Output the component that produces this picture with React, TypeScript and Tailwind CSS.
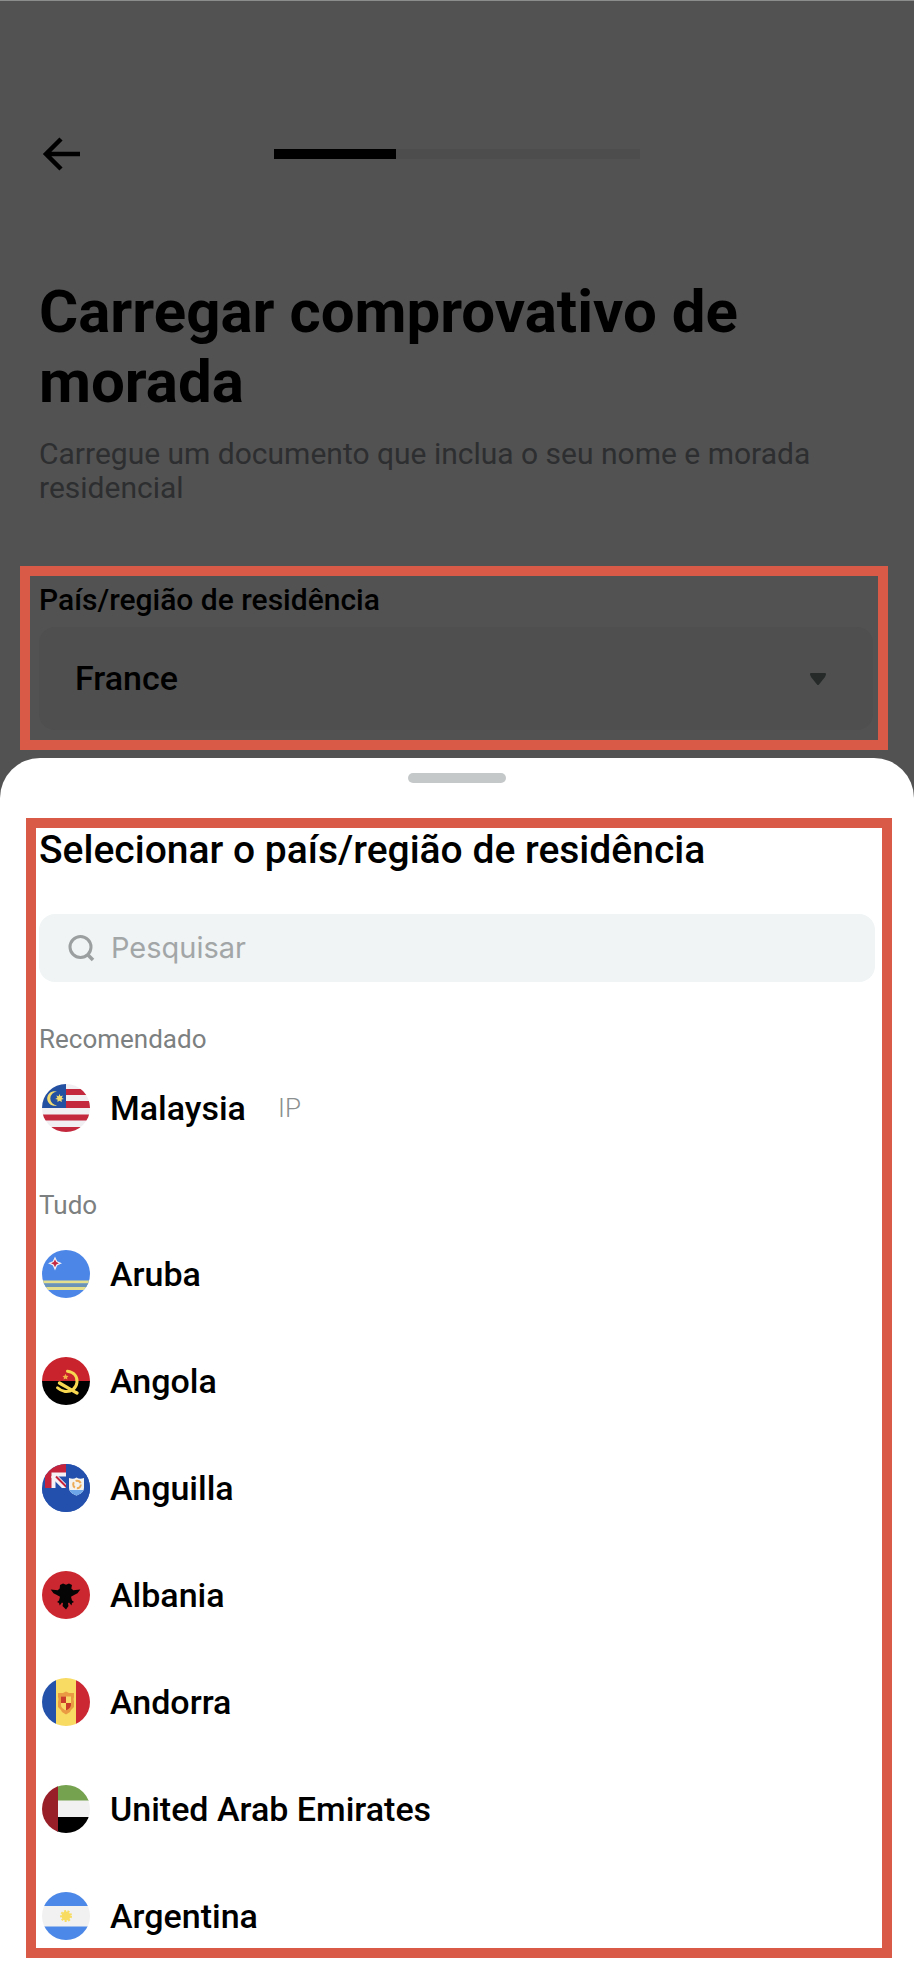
import { useId, useState, type ReactNode } from "react";

function Flag({ children }: { children: ReactNode }) {
  const id = useId();
  return (
    <svg viewBox="0 0 48 48" className="size-12 shrink-0" aria-hidden="true">
      <clipPath id={id}>
        <circle cx="24" cy="24" r="24" />
      </clipPath>
      <g clipPath={`url(#${id})`}>{children}</g>
    </svg>
  );
}

function Malaysia() {
  return (
    <Flag>
      <path fill="#f2eff2" d="M0 0h48v48H0z" />
      <path fill="#c4283c" d="M24 5h24v6H24zM24 17h24v7H24zM0 30.500h48v6H0zM0 43h48v5H0z" />
      <path fill="#2350a0" d="M0 0h24v24H0z" />
      <path fill="#f2dc72" d="M15 7.800a7.200 7.200 0 1 0 0 13.400a6 6 0 1 1 0-13.400z" />
      <path
        fill="#f2dc72"
        d="M17.500 10l1 2.300 2.400-.7-1.200 2.200 2.200 1.200-2.400.6.3 2.500-2.300-1.400-2.100 1.400.2-2.500-2.400-.6 2.200-1.200-1.100-2.200 2.300.7z"
      />
    </Flag>
  );
}

function Aruba() {
  return (
    <Flag>
      <path fill="#4c87e8" d="M0 0h48v48H0z" />
      <path fill="#e4df8c" d="M0 30.500h48v3H0zM0 37h48v3H0z" />
      <path fill="#6b93b8" d="M0 33.500h48v3.500H0z" />
      <path fill="#f3eef4" d="M13 6.500l2.200 4.700 4.800 2.100-4.800 2.200L13 20.500l-2.200-5L6 13.300l4.800-2.100z" />
      <path fill="#c32a45" d="M13 9.500l1.300 2.600 2.600 1.200-2.600 1.300L13 17.200l-1.300-2.600-2.600-1.300 2.600-1.200z" />
    </Flag>
  );
}

function Angola() {
  return (
    <Flag>
      <path fill="#c9232d" d="M0 0h48v24H0z" />
      <path fill="#000" d="M0 24h48v24H0z" />
      <path fill="none" stroke="#f7d750" strokeWidth="3" strokeLinecap="round" d="M25.500 14.200c6.500.8 10 5.300 9.500 11-.6 6.200-6 10-12 9.300-3-.5-5.500-1.700-7.500-3.700" />
      <path fill="none" stroke="#f7d750" strokeWidth="3.400" strokeLinecap="round" d="M17.500 26c5 2.800 11 6.500 17.500 10" />
      <path fill="#f4b347" d="M23.500 16.800l.9 1.900 2.100.2-1.500 1.500.4 2.100-1.900-1-1.900 1 .4-2.100-1.500-1.500 2.100-.2z" />
    </Flag>
  );
}

function Anguilla() {
  return (
    <Flag>
      <path fill="#2350ad" d="M0 0h48v48H0z" />
      <path fill="#c5233b" d="M3 0h21v24H3z" />
      <path fill="#f5f1f5" d="M9.500 8.500H24V24H9.500z" />
      <path fill="#2350ad" d="M14.500 12.500H24V24H13.500V13.500z" />
      <path stroke="#f5f1f5" strokeWidth="6" d="M11 11l13 13" />
      <path stroke="#c5233b" strokeWidth="2" d="M14 12.500l11 11" />
      <path fill="#2350ad" d="M24 0h24v48H0V24h24z" />
      <path fill="#f5f3ef" d="M27 14c3 1 5 1 7.500-.5C37 15 39 15 42 14v9.500c0 5-4 6.500-7.500 8-3.500-1.500-7.500-3-7.500-8z" />
      <path fill="#6ca5e8" d="M27.500 26h14c-1 3-4 4.200-7 5.500-3-1.300-6-2.500-7-5.500z" />
      <circle cx="35" cy="20.500" r="3.800" fill="none" stroke="#edab56" strokeWidth="2" strokeDasharray="6 2" />
    </Flag>
  );
}

function Albania() {
  return (
    <Flag>
      <path fill="#cb2730" d="M0 0h48v48H0z" />
      <path
        fill="#050505"
        d="M18 14l3-1.500 3 1.200 3-1.200 3 1.500-.7 3.500 2 1.800 7-.8-2.800 3.700-2.500 1.300-4 2.200 1 3.800 2 1.500-2 1-.5 2.500-2.500-3-1 .7.500 2.800L24 38.500 20.500 35l.5-2.800-1-.7-2.300 3-.7-2.500-2-1 2-1.500 1-3.800-4-2.200-2.500-1.300-2.800-3.700 7 .8 2-1.800z"
      />
    </Flag>
  );
}

function Andorra() {
  return (
    <Flag>
      <path fill="#2452aa" d="M0 0h14v48H0z" />
      <path fill="#f8db62" d="M14 0h20v48H14z" />
      <path fill="#cb2833" d="M34 0h14v48H34z" />
      <path fill="#e99a42" d="M16 15l5 0 3-1.500 3 1.500h5v4l-.5 2 .5 3v5l-3 3-1 2-4 2.500-4-2.500-1-2-3-3v-5l.5-3-.5-2z" />
      <path fill="#f9d968" d="M19 18.500h10v8.500c0 3-3 4.500-5 5.500-2-1-5-2.500-5-5.500z" />
      <path fill="#cb3b2b" d="M19 18.500h5V25h-5zM24 25h5v2c0 3-3 4.500-5 5.500z" />
    </Flag>
  );
}

function Emirates() {
  return (
    <Flag>
      <path fill="#75a24f" d="M15 0h33v16H15z" />
      <path fill="#f1f1f1" d="M15 15.500h33v17H15z" />
      <path fill="#000" d="M15 32h33v16H15z" />
      <path fill="#981f28" d="M0 0h16v48H0z" />
    </Flag>
  );
}

function Argentina() {
  return (
    <Flag>
      <path fill="#f1f1f1" d="M0 0h48v48H0z" />
      <path fill="#4c88e8" d="M0 0h48v14H0zM0 34.500h48V48H0z" />
      <circle cx="24" cy="24" r="4.500" fill="#f8dc62" />
      <circle cx="24" cy="24" r="5" fill="none" stroke="#f8dc62" strokeWidth="2" strokeDasharray="2 1.500" />
    </Flag>
  );
}

const countries = [
  { name: "Aruba", flag: <Aruba /> },
  { name: "Angola", flag: <Angola /> },
  { name: "Anguilla", flag: <Anguilla /> },
  { name: "Albania", flag: <Albania /> },
  { name: "Andorra", flag: <Andorra /> },
  { name: "United Arab Emirates", flag: <Emirates /> },
  { name: "Argentina", flag: <Argentina /> },
];

function CountryRow({ name, flag, note, onPick }: { name: string; flag: ReactNode; note?: string; onPick: (name: string) => void }) {
  return (
    <li>
      <button type="button" onClick={() => onPick(name)} className="flex h-[62px] w-full items-center pl-[3px] text-left">
        {flag}
        <span className="ml-5 text-[34px] font-medium text-black">{name}</span>
        {note && <span className="ml-8 text-[26px] font-light text-[#8b8f8f]">{note}</span>}
      </button>
    </li>
  );
}

export default function App() {
  const [country, setCountry] = useState("France");
  const [query, setQuery] = useState("");

  return (
    <div className="flex min-h-screen flex-col border-t border-[#8b8d8c] bg-[#525252] font-['Roboto',sans-serif]">
      <header className="mt-[131px] grid h-11 grid-cols-[1fr_366px_1fr] items-center px-10">
        <button type="button" aria-label="Voltar" className="flex size-11 items-center">
          <svg viewBox="0 0 44 44" className="size-11" fill="none" stroke="#000" strokeWidth="4.500">
            <path d="M40 22H6M21 7L6 22l15 15" />
          </svg>
        </button>
        <div role="progressbar" aria-label="Progresso" aria-valuenow={33} aria-valuemin={0} aria-valuemax={100} className="h-2.5 bg-[#4d4d4d]">
          <div className="h-full w-1/3 bg-black" />
        </div>
      </header>

      <main className="flex flex-col">
        <div className="mt-[101px] px-[39px]">
          <h1 className="text-[60px] leading-[70px] font-bold text-black">Carregar comprovativo de morada</h1>
          <p className="mt-5 text-[30px] leading-[34px] text-[#2d2e30]">
            Carregue um documento que inclua o seu nome e morada residencial
          </p>
        </div>

        <section className="mt-[61px] mr-[26px] ml-5 border-10 border-[#d95b47] pt-1.5 pr-[5px] pb-2.5 pl-[9px]">
          <label htmlFor="residence" className="block text-[30px] leading-9 font-medium text-black">
            País/região de residência
          </label>
          <div className="relative mt-[9px]">
            <select
              id="residence"
              value={country}
              onChange={(e) => setCountry(e.target.value)}
              className="h-[103px] w-full appearance-none rounded-2xl bg-[#4f4f4f] px-9 text-[34px] font-medium text-black"
            >
              <option>France</option>
              <option>Malaysia</option>
              {countries.map((c) => (
                <option key={c.name}>{c.name}</option>
              ))}
            </select>
            <svg viewBox="0 0 18 14" className="pointer-events-none absolute top-1/2 right-[46px] h-3.5 w-[18px] -translate-y-1/2" fill="#262b2a" aria-hidden="true">
              <path d="M2 1h14q1.500 0 1 1.500-.5 2.500-3 5L10 12.500q-1 1-2 0L4 7.500Q1.500 5 1 2.500.5 1 2 1z" />
            </svg>
          </div>
        </section>
      </main>

      <div role="dialog" aria-labelledby="sheet-title" className="mt-2 flex flex-1 flex-col rounded-t-[40px] bg-white">
        <div className="mx-auto mt-[15px] h-2.5 w-[98px] rounded-full bg-[#c5c8c9]" />
        <div className="mt-[35px] mr-[22px] mb-5 ml-[26px] flex flex-col border-10 border-[#d95b47] pr-[7px] pb-px pl-[3px]">
          <h2 id="sheet-title" className="text-[39px] leading-11 font-medium text-black">
            Selecionar o país/região de residência
          </h2>
          <label className="mt-[42px] flex h-[68px] items-center gap-4 rounded-2xl bg-[#f0f4f5] px-7">
            <svg viewBox="0 0 28 28" className="size-7 shrink-0" fill="none" stroke="#9b9f9f" strokeWidth="3" aria-hidden="true">
              <circle cx="13.500" cy="13" r="10.500" />
              <path d="M20 20l6 6" strokeWidth="3.500" />
            </svg>
            <input
              type="search"
              aria-label="Pesquisar"
              placeholder="Pesquisar"
              value={query}
              onChange={(e) => setQuery(e.target.value)}
              className="h-10 min-w-0 flex-1 bg-transparent font-['Inter',sans-serif] text-[29px] text-black outline-none placeholder:text-[#a3a6a7]"
            />
          </label>

          <h3 className="mt-[41px] text-[26px] leading-8 text-[#7c8080]">Recomendado</h3>
          <ul className="mt-[22px]">
            <CountryRow name="Malaysia" note="IP" flag={<Malaysia />} onPick={setCountry} />
          </ul>

          <h3 className="mt-[50px] text-[26px] leading-8 text-[#7c8080]">Tudo</h3>
          <ul className="mt-[22px] flex flex-col gap-[45px]">
            {countries.map((c) => (
              <CountryRow key={c.name} name={c.name} flag={c.flag} onPick={setCountry} />
            ))}
          </ul>
        </div>
      </div>
    </div>
  );
}
